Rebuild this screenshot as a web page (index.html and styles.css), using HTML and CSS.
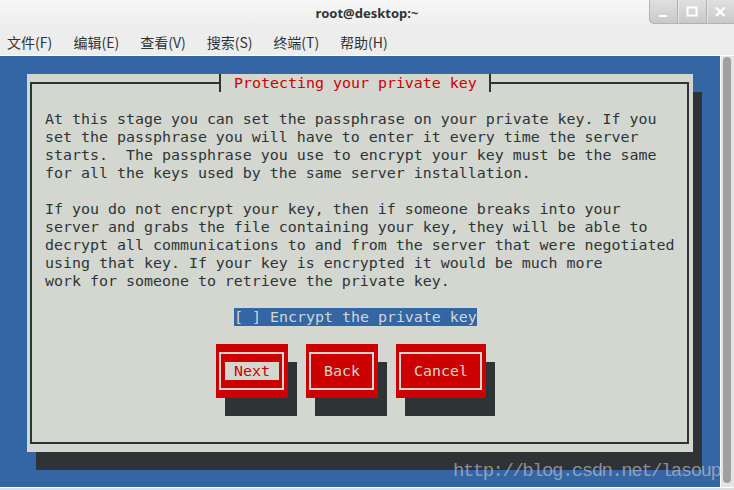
FILE: index.html
```html
<!DOCTYPE html>
<html lang="zh-CN">
<head>
  <meta charset="UTF-8" />
  <title>root@desktop:~</title>
  <link rel="stylesheet" href="styles.css">
</head>
<body>
  <div class="window">
    <div class="titlebar">
      <span></span>
      <span class="title">root@desktop:~</span>
      <div class="wm-buttons">
        <span class="wm-btn">
          <svg width="27" height="23" viewBox="0 0 27 23"><rect x="9" y="15" width="8" height="2" fill="#fff"/></svg>
        </span>
        <span class="wm-btn">
          <svg width="28" height="23" viewBox="0 0 28 23"><rect x="9.5" y="7.5" width="9" height="8" fill="none" stroke="#fff" stroke-width="2"/></svg>
        </span>
        <span class="wm-btn">
          <svg width="27" height="23" viewBox="0 0 27 23"><path d="M9 7.5 L17.5 16 M17.5 7.5 L9 16" stroke="#fff" stroke-width="2.4"/></svg>
        </span>
      </div>
    </div>

    <div class="menubar">
      <span>文件(F)</span>
      <span>编辑(E)</span>
      <span>查看(V)</span>
      <span>搜索(S)</span>
      <span>终端(T)</span>
      <span>帮助(H)</span>
    </div>

    <div class="content">
      <div class="terminal">
        <div class="dialog">
          <div class="frame">
            <div class="dialog-title">Protecting your private key</div>
<pre class="message">At this stage you can set the passphrase on your private key. If you
set the passphrase you will have to enter it every time the server
starts.  The passphrase you use to encrypt your key must be the same
for all the keys used by the same server installation.

If you do not encrypt your key, then if someone breaks into your
server and grabs the file containing your key, they will be able to
decrypt all communications to and from the server that were negotiated
using that key. If your key is encrypted it would be much more
work for someone to retrieve the private key.</pre>
            <div class="checkbox"><span>[ ] Encrypt the private key</span></div>
            <div class="buttons">
              <div class="btn"><div class="btn-inner"><span class="btn-label active"> Next </span></div></div>
              <div class="btn"><div class="btn-inner"><span class="btn-label"> Back </span></div></div>
              <div class="btn wide"><div class="btn-inner"><span class="btn-label"> Cancel </span></div></div>
            </div>
          </div>
        </div>
      </div>
      <div class="scrollbar"><div class="thumb"></div></div>
      <div class="watermark">http://blog.csdn.net/lasoup</div>
    </div>
  </div>
</body>
</html>
```

FILE: styles.css
```css
body {
  margin: 0;
  background: #dcdcdc;
}
.window {
  width: 734px;
  height: 490px;
  overflow: hidden;
  font-family: "Noto Sans", "Noto Sans CJK SC", sans-serif;
}

/* title bar */
.titlebar {
  height: 29px;
  display: grid;
  grid-template-columns: 85px 1fr 85px;
  align-items: start;
  background: linear-gradient(#f7f7f7, #ededed);
}
.title {
  text-align: center;
  font-weight: bold;
  font-size: 13px;
  line-height: 26px;
  color: #2e3436;
}
.wm-buttons {
  display: flex;
  height: 24px;
  box-sizing: border-box;
  border-left: 1px solid #b3b3b3;
  border-bottom: 1px solid #b3b3b3;
  border-radius: 0 0 0 5px;
  background: linear-gradient(#e0e0e0, #c9c9c9);
}
.wm-btn {
  display: flex;
  align-items: center;
  justify-content: center;
  width: 27px;
}
.wm-btn + .wm-btn {
  border-left: 1px solid #b0b0b0;
  box-shadow: inset 1px 0 #e8e8e8;
}
.wm-btn:nth-child(2) {
  width: 28px;
}

/* menu */
.menubar {
  height: 26px;
  display: flex;
  align-items: center;
  padding-left: 7px;
  background: #ededed;
  font-family: "Noto Sans CJK SC", sans-serif;
  font-size: 14px;
  color: #2e3436;
}
.menubar span {
  width: 66.6px;
}

/* terminal */
.content {
  position: relative;
  display: flex;
  border-top: 1px solid #fff;
  border-bottom: 1px solid #fff;
}
.terminal {
  flex: none;
  width: 693px;
  height: 413px;
  padding: 18px 0 0 27px;
  border-right: 1px solid #fff;
  background: #3465a4;
  font-family: "DejaVu Sans Mono", monospace;
  font-size: 14.95px;
  line-height: 18px;
  color: #2e3436;
}
.dialog {
  width: 666px;
  height: 378px;
  box-sizing: border-box;
  padding: 8px 4px 8px 3px;
  background: #d3d7cf;
  box-shadow: 9px 18px 0 #2e3436;
}
.frame {
  position: relative;
  height: 100%;
  box-sizing: border-box;
  border: 2px solid #2e3436;
  padding: 26px 0 0 13px;
}
.dialog-title {
  position: absolute;
  top: -10px;
  left: 187px;
  width: 272px;
  height: 18px;
  box-sizing: border-box;
  padding-left: 13px;
  border-left: 2px solid #2e3436;
  border-right: 2px solid #2e3436;
  background: #d3d7cf;
  color: #cc0000;
  white-space: pre;
}
.message {
  margin: 0;
  font: inherit;
  white-space: pre;
}
.checkbox {
  height: 18px;
  margin: 18px 0 0 189px;
}
.checkbox span {
  display: inline-block;
  height: 18px;
  background: #3465a4;
  color: #d3d7cf;
  white-space: pre;
}
.buttons {
  display: flex;
  gap: 18px;
  margin: 18px 0 0 171px;
}
.btn {
  display: flex;
  width: 72px;
  height: 54px;
  box-sizing: border-box;
  padding: 8px 4px 8px 3px;
  background: #cc0000;
  box-shadow: 9px 18px 0 #2e3436;
}
.btn.wide {
  width: 90px;
}
.btn-inner {
  flex: 1;
  display: flex;
  align-items: center;
  padding-left: 4px;
  border: 2px solid #d3d7cf;
}
.btn-label {
  height: 18px;
  color: #d3d7cf;
  white-space: pre;
}
.btn-label.active {
  background: #d3d7cf;
  color: #cc0000;
}

.scrollbar {
  flex: none;
  display: flex;
  width: 13px;
  box-sizing: border-box;
  padding: 1px 3px 4px 2px;
  background: #e4e4e4;
}
.thumb {
  flex: 1;
  background: #a0a0a0;
  border-radius: 4px;
}

.watermark {
  position: absolute;
  left: 453px;
  top: 406px;
  font-family: "Liberation Mono", monospace;
  font-size: 19px;
  line-height: 19px;
  letter-spacing: -1.5px;
  color: rgba(205, 205, 205, 0.6);
  white-space: pre;
}
```
